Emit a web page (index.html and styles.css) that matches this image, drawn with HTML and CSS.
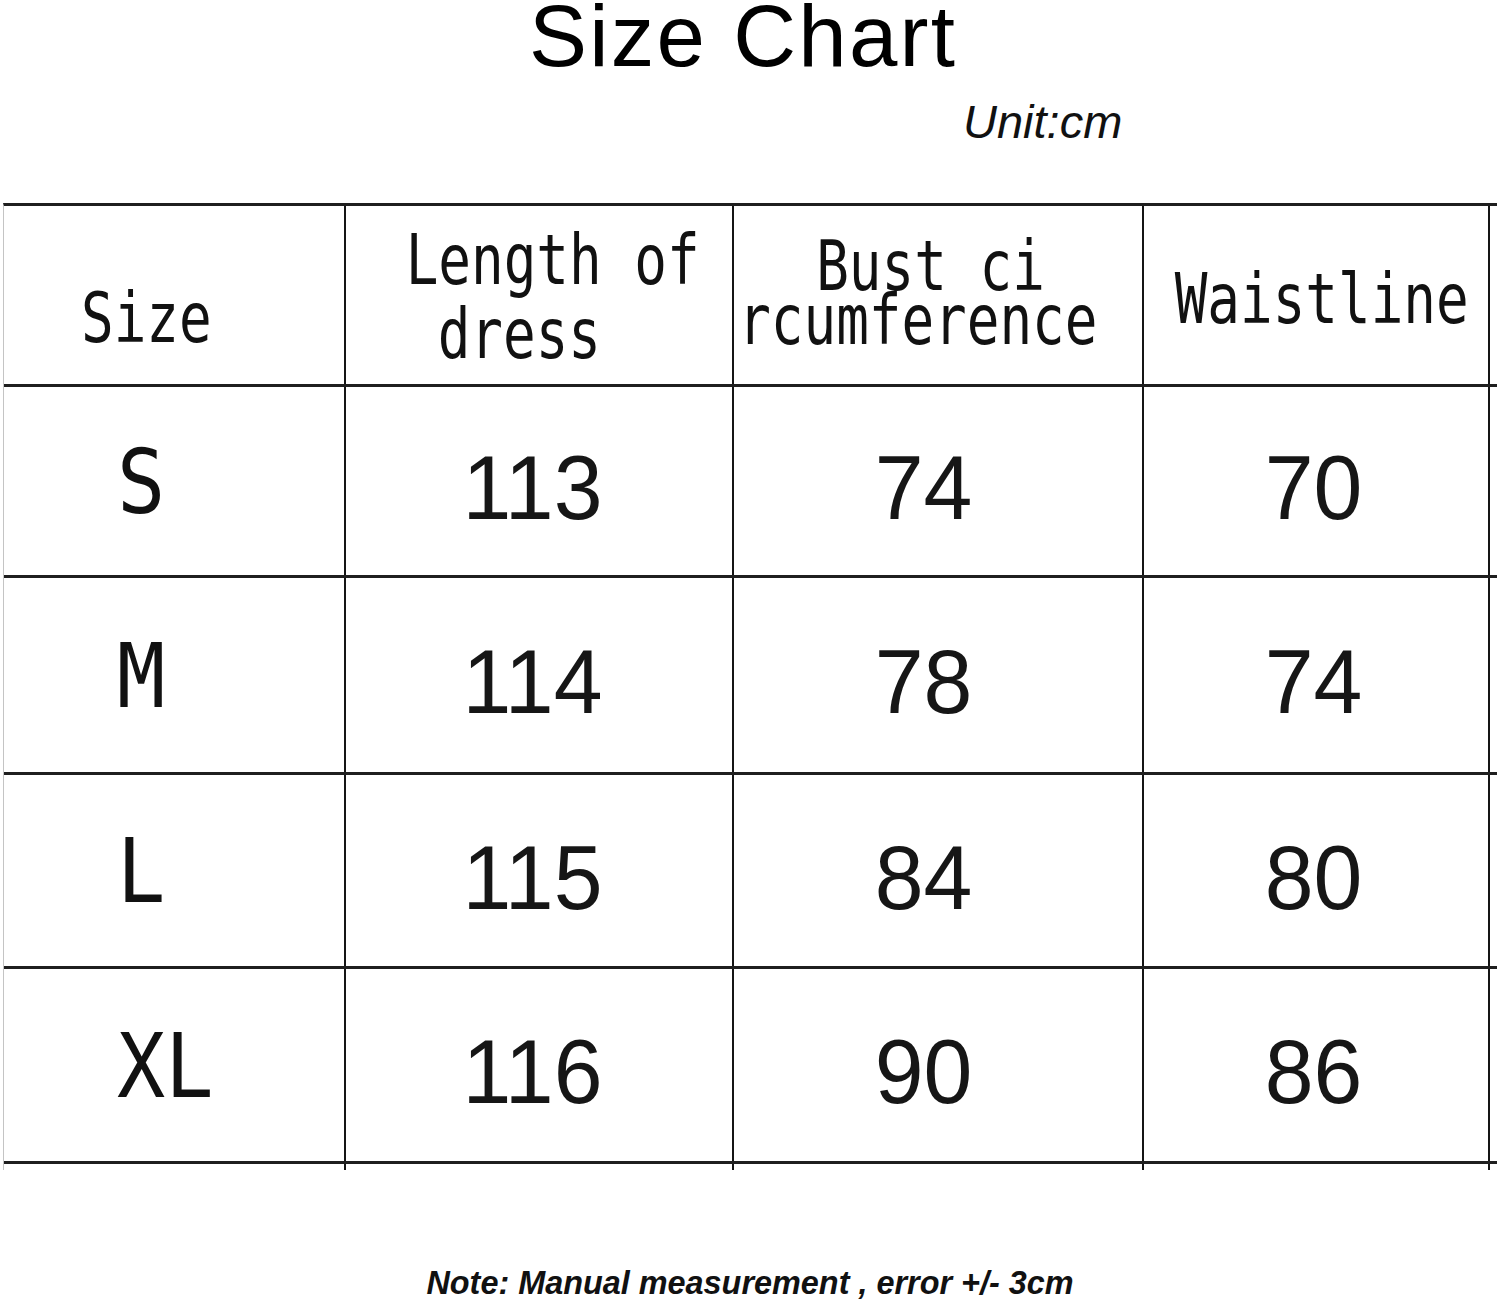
FILE: index.html
```html
<!DOCTYPE html>
<html lang="en">
<head>
<meta charset="utf-8">
<title>Size Chart</title>
<link rel="stylesheet" href="styles.css">
</head>
<body>
<header class="head">
  <h1 class="title">Size Chart</h1>
  <p class="unit">Unit:cm</p>
</header>
<div class="chart">
  <div class="row row-head">
    <div class="cell hd hd-size"><span class="hl hl-size">Size</span></div>
    <div class="cell hd hd-len"><span class="hl hl-len1">Length of</span><span class="hl hl-len2">dress</span></div>
    <div class="cell hd hd-bust"><span class="hl hl-bust1">Bust ci</span><span class="hl hl-bust2">rcumference</span></div>
    <div class="cell hd hd-waist"><span class="hl hl-waist">Waistline</span></div>
    <div class="gap"></div>
  </div>
  <div class="row row-s">
    <div class="cell lc"><span class="lt">S</span></div>
    <div class="cell dc dc2"><span class="num">113</span></div>
    <div class="cell dc dc3"><span class="num">74</span></div>
    <div class="cell dc dc4"><span class="num">70</span></div>
    <div class="gap"></div>
  </div>
  <div class="row row-m">
    <div class="cell lc"><span class="lt">M</span></div>
    <div class="cell dc dc2"><span class="num">114</span></div>
    <div class="cell dc dc3"><span class="num">78</span></div>
    <div class="cell dc dc4"><span class="num">74</span></div>
    <div class="gap"></div>
  </div>
  <div class="row row-l">
    <div class="cell lc"><span class="lt">L</span></div>
    <div class="cell dc dc2"><span class="num">115</span></div>
    <div class="cell dc dc3"><span class="num">84</span></div>
    <div class="cell dc dc4"><span class="num">80</span></div>
    <div class="gap"></div>
  </div>
  <div class="row row-xl">
    <div class="cell lc"><span class="lt">XL</span></div>
    <div class="cell dc dc2"><span class="num">116</span></div>
    <div class="cell dc dc3"><span class="num">90</span></div>
    <div class="cell dc dc4"><span class="num">86</span></div>
    <div class="gap"></div>
  </div>
  <div class="row row-tail">
    <div class="cell"></div>
    <div class="cell"></div>
    <div class="cell"></div>
    <div class="cell"></div>
    <div class="gap"></div>
  </div>
</div>
<p class="note">Note: Manual measurement , error +/- 3cm</p>
</body>
</html>
```

FILE: styles.css
```css
* {
  box-sizing: border-box;
}

html, body {
  margin: 0;
  padding: 0;
  background: #ffffff;
}

body {
  width: 1500px;
  height: 1303px;
  overflow: hidden;
  color: #000;
  font-family: "Liberation Sans", Arial, sans-serif;
}

/* ---------- heading ---------- */
.title {
  margin: 0;
  padding-right: 14px;
  font-family: "Liberation Sans", Arial, sans-serif;
  font-weight: 400;
  font-size: 87px;
  line-height: 72px;
  letter-spacing: 2.2px;
  text-align: center;
  color: #000;
}

.unit {
  margin: 30px 0 0 0;
  padding-left: 963px;
  font-family: "Liberation Sans", Arial, sans-serif;
  font-style: italic;
  font-size: 47px;
  line-height: 40px;
  color: #111;
}

/* ---------- chart ---------- */
.chart {
  margin: 61px 0 0 3px;
  width: 1494px;
  border-top: 3px solid #1f1f1f;
  border-left: 1px solid #c4c4c4;
}

.row {
  display: grid;
  grid-template-columns: 342px 388px 410px 346px 7px;
  border-bottom: 3px solid #1f1f1f;
}

.row-head { height: 181px; }
.row-s    { height: 191px; }
.row-m    { height: 197px; }
.row-l    { height: 194px; }
.row-xl   { height: 195px; }
.row-tail { height: 6px; border-bottom: none; }

.cell {
  border-right: 2px solid #151515;
  color: #111;
}

/* header cells */
.hd {
  display: flex;
  flex-direction: column;
  align-items: center;
  font-family: "DejaVu Sans Mono", "Liberation Mono", monospace;
  font-size: 70px;
  line-height: 74px;
}

.hl {
  display: block;
  white-space: pre;
  transform: scaleX(0.775);
}

.hd-size  { padding-top: 75px; }
.hd-len   { padding-top: 17px; }
.hd-bust  { padding-top: 33px; line-height: 54px; }
.hd-waist { padding-top: 56px; }

.hl-size  { margin-right: 55px; }
.hl-len1  { margin-left: 28px; }
.hl-len2  { margin-right: 40px; }
.hl-bust1 { margin-right: 15px; }
.hl-bust2 { margin-right: 40px; }
.hl-waist { margin-left: 12px; }

/* size letters */
.lc {
  display: flex;
  flex-direction: column;
  justify-content: center;
  align-items: flex-start;
  padding-left: 113px;
  padding-top: 2px;
  font-family: "DejaVu Sans Mono", "Liberation Mono", monospace;
  font-size: 89px;
  line-height: 89px;
}

.lt {
  display: block;
  white-space: pre;
  transform: scaleX(0.9);
  transform-origin: left center;
}

/* numbers */
.dc {
  display: flex;
  flex-direction: column;
  justify-content: center;
  align-items: center;
  padding-top: 13px;
  font-family: "Liberation Sans", Arial, sans-serif;
  font-size: 91px;
  line-height: 91px;
  color: #161616;
}

.num {
  display: block;
  white-space: pre;
  transform: scaleX(0.965);
}

.dc2 .num { margin-right: 12px; }
.dc3 .num { margin-right: 28px; }
.dc4 .num { margin-right: 4px; }

/* ---------- note ---------- */
.note {
  margin: 95px 0 0 0;
  text-align: center;
  font-family: "Liberation Sans", Arial, sans-serif;
  font-style: italic;
  font-weight: 700;
  font-size: 32.4px;
  line-height: 36px;
  color: #111;
}
```
